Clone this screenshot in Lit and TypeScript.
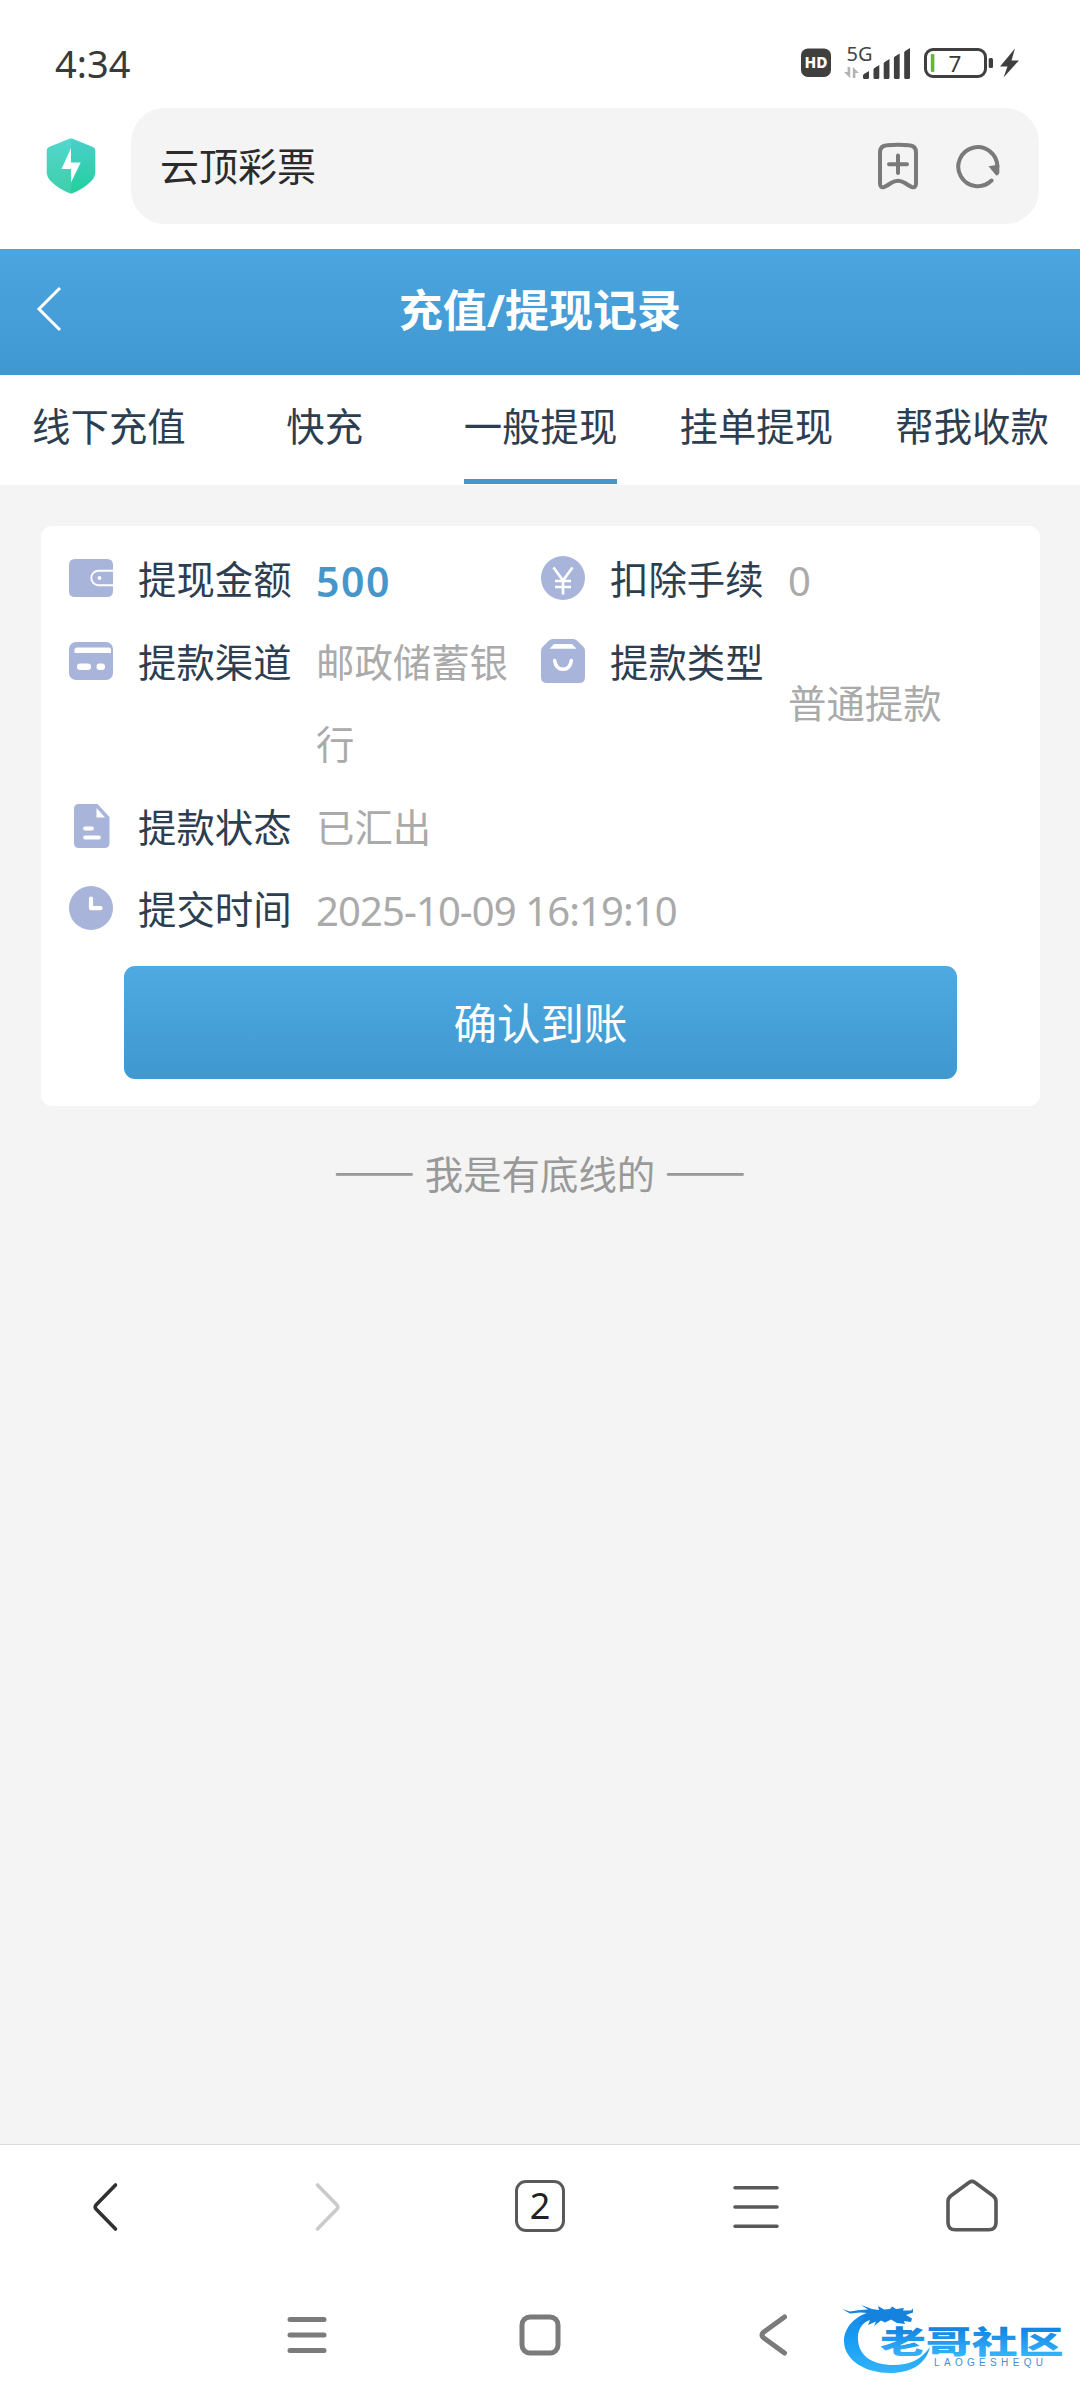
import { LitElement, html, svg, css } from "lit";
import { customElement, property } from "lit/decorators.js";
import { classMap } from "lit/directives/class-map.js";

const FONT = css`"Noto Sans", "Noto Sans CJK SC", sans-serif`;

@customElement("status-bar")
class StatusBar extends LitElement {
  static styles = css`
    :host { display: flex; height: 108px; padding: 22px 60px 0 55px; box-sizing: border-box; justify-content: space-between; font-family: ${FONT}; }
    .time { font-size: 38px; line-height: 82px; color: #3a3a3a; }
    .icons { display: flex; height: 82px; align-items: center; }
    svg { display: block; }
  `;
  render() {
    return html`
      <div class="time">4:34</div>
      <div class="icons">
        <svg width="220" height="60" viewBox="800 33 220 60">
          <rect x="801" y="48.5" width="30" height="28.5" rx="7" fill="#3f3f3f" />
          <text x="816" y="68.4" text-anchor="middle" font-size="15.5" font-weight="800" fill="#fff" textLength="23" lengthAdjust="spacingAndGlyphs">HD</text>
          <text x="846.5" y="61" font-size="20" fill="#444" textLength="26" lengthAdjust="spacingAndGlyphs">5G</text>
          <path d="M844 72h3.600v-5h2.600v11.200zM859 73h-3.600v5h-2.600V67z" fill="#b4b4b4" />
          <g fill="#3f3f3f">
            <path d="M863 75.500q0-1 1-1.500l5-3v6.500q0 1.500-1.500 1.500h-3q-1.500 0-1.500-1.500z" />
            <path d="M873.500 69.500q0-1 1-1.500l4.800-3v12.500q0 1.500-1.500 1.500h-2.800q-1.500 0-1.500-1.500z" />
            <path d="M883.700 63.500q0-1 1-1.500l4.800-3v18.500q0 1.500-1.500 1.500h-2.800q-1.500 0-1.500-1.500z" />
            <path d="M893.900 58q0-1 1-1.500l4.800-3v24q0 1.500-1.500 1.500h-2.800q-1.500 0-1.500-1.500z" />
            <path d="M904.200 52.500q0-1 1-1.500l4.800-3v29.500q0 1.500-1.500 1.500h-2.800q-1.500 0-1.500-1.500z" />
          </g>
          <rect x="925.500" y="49.500" width="60" height="27" rx="7.500" fill="none" stroke="#3f3f3f" stroke-width="3" />
          <rect x="930.800" y="54" width="3.600" height="18" rx="1.200" fill="#66b82e" />
          <text x="955" y="71.500" text-anchor="middle" font-size="22.500" fill="#3a3a3a">7</text>
          <rect x="988.700" y="58" width="4.300" height="10" rx="1.500" fill="#3f3f3f" />
          <path d="M1015 48.500 1000 66.500h7.500L1003.500 77.500 1019 60.500h-7.500z" fill="#3f3f3f" />
        </svg>
      </div>
    `;
  }
}

@customElement("address-bar")
class AddressBar extends LitElement {
  static styles = css`
    :host { display: flex; height: 141px; padding: 0 41px 25px 46px; box-sizing: border-box; align-items: center; font-family: ${FONT}; }
    .shield { width: 50px; height: 56px; margin-right: 35px; }
    .field { flex: 1; height: 116px; border-radius: 34px; background: #f4f4f4; display: flex; align-items: center; padding: 0 37px 0 29px; }
    .title { flex: 1; font-size: 39px; line-height: 60px; color: #2b2b2b; }
    .mark { margin-right: 34px; }
    svg { display: block; }
  `;
  render() {
    return html`
      <svg class="shield" viewBox="0 0 50 56">
        <defs>
          <linearGradient id="sl" x1="0" y1="0" x2="0" y2="1"><stop offset="0" stop-color="#55d6cf" /><stop offset="1" stop-color="#3ccfa9" /></linearGradient>
          <linearGradient id="sr" x1="0" y1="0" x2="0" y2="1"><stop offset="0" stop-color="#4ad0cc" /><stop offset="1" stop-color="#22cf9c" /></linearGradient>
        </defs>
        <path d="M25 .5q-1.500 0-3 .8L3 9Q.7 10 .7 12.500V34q0 5 4 9Q12 50.500 23 55q1 .5 2 .5z" fill="url(#sl)" />
        <path d="M25 .5q1.500 0 3 .8L47 9q2.300 1 2.300 3.500V34q0 5-4 9Q38 50.500 27 55q-1 .5-2 .5z" fill="url(#sr)" />
        <path d="M25 10v14.500h9.700L25 44.500V31h-9.500z" fill="#fff" />
      </svg>
      <div class="field">
        <div class="title">云顶彩票</div>
        <svg class="mark" width="44" height="48" viewBox="0 0 44 48" fill="none" stroke="#7a7a7a" stroke-width="4" stroke-linecap="round" stroke-linejoin="round">
          <path d="M4 10.500q0-7 7-7.300 11-.8 22 0 7 .3 7 7.300v31q0 5-4.500 3.300-3-1.300-6.500-3.800-7-4.500-14 0-3.500 2.500-6.500 3.800Q4 46.500 4 41.500z" />
          <path d="M22 13.500v17.500M13 22.200h18" />
        </svg>
        <svg width="48" height="48" viewBox="0 0 48 48">
          <path d="M37.500 38.500A19.500 19.500 0 1 1 43.300 25" fill="none" stroke="#7a7a7a" stroke-width="4" stroke-linecap="round" />
          <path d="M34.500 24.200 45.300 22.500V31q-1 3-3.300 2.300z" fill="#7a7a7a" />
        </svg>
      </div>
    `;
  }
}

@customElement("page-header")
class PageHeader extends LitElement {
  static styles = css`
    :host { display: grid; grid-template-columns: 120px 1fr 120px; height: 126px; align-items: center; font-family: ${FONT}; background: linear-gradient(#4ca5de, #3f98d1); }
    .back { margin: -6px 0 0 35px; display: block; }
    .title { margin: 0 0 4px; text-align: center; font-size: 44px; line-height: 64px; font-weight: 700; color: #fff; }
  `;
  render() {
    return html`
      <svg class="back" width="30" height="46" viewBox="0 0 30 46" fill="none" stroke="#fff" stroke-width="3"><path d="M25 2 4 23l21 21" /></svg>
      <h1 class="title">充值/提现记录</h1>
    `;
  }
}

@customElement("record-tabs")
class RecordTabs extends LitElement {
  @property({ type: Number }) active = 2;
  private names = ["线下充值", "快充", "一般提现", "挂单提现", "帮我收款"];
  static styles = css`
    :host { display: grid; grid-template-columns: repeat(5, 1fr); height: 110px; padding-left: 1px; box-sizing: border-box; background: #fff; font-family: ${FONT}; }
    .tab { justify-self: center; height: 109px; box-sizing: border-box; font-size: 38.400px; line-height: 102px; color: #2c3e50; }
    .on { border-bottom: 5px solid #4596cb; }
  `;
  render() {
    return this.names.map((n, i) => html`<div class=${classMap({ tab: true, on: i === this.active })}>${n}</div>`);
  }
}

const ICONS = {
  wallet: svg`<path d="M6 3h32q6 0 6 6v2.500H44V35q0 6-6 6H6q-6 0-6-6V9q0-6 6-6z" />
    <path d="M44 14.800H29.500a7.200 7.200 0 0 0 0 14.400H44" fill="none" stroke="#fff" stroke-width="1.900" /><circle cx="30.500" cy="22" r="1.900" fill="#fff" />`,
  card: svg`<rect y="3" width="44" height="38" rx="7" /><path d="M8 8.500h32q2 0 2 2V14H5.500v-3q0-2.500 2.500-2.500z" fill="#fff" />
    <rect x="8" y="24.500" width="14" height="6.500" rx="3" fill="#fff" /><rect x="27.500" y="24.500" width="8.500" height="6.500" rx="3" fill="#fff" />`,
  yen: svg`<circle cx="22" cy="22" r="22" /><path d="M12.500 11.500 22 24.500l9.500-13M22 24.500v14M14 25h16M14 31h16" fill="none" stroke="#fff" stroke-width="2.700" />`,
  bag: svg`<path d="M12 0h20q2.500 0 4.500 2l6 6q1.500 1.600 1.500 4v26q0 6-6 6H6q-6 0-6-6V12q0-2.400 1.500-4l6-6Q9.500 0 12 0z" />
    <path d="M13 5h18l4.500 4.700h-27z" fill="#fff" /><path d="M13.700 21.500q1 8.700 8.300 8.700t8.300-8.700" fill="none" stroke="#fff" stroke-width="3.600" stroke-linecap="round" />`,
  doc: svg`<path d="M10 0h18.500L40.500 13v26q0 5-5 5H10q-5 0-5-5V5q0-5 5-5z" /><path d="M27.500 4v9.500H36z" fill="#fff" />
    <path d="M16 24.500h7M16 33.500h14" stroke="#fff" stroke-width="3.800" stroke-linecap="round" />`,
  clock: svg`<circle cx="22" cy="22" r="22" /><path d="M22 12.500v9.700h9.500" fill="none" stroke="#fff" stroke-width="4.200" stroke-linecap="round" stroke-linejoin="round" />`,
};

@customElement("record-field")
class RecordField extends LitElement {
  @property() icon: keyof typeof ICONS = "wallet";
  @property() label = "";
  @property() value = "";
  @property() kind = "";
  static styles = css`
    :host { display: flex; align-items: center; font-family: ${FONT}; font-size: 38.400px; line-height: 82.500px; }
    .head { display: flex; align-self: flex-start; align-items: center; height: 82.500px; width: 247px; flex: none; }
    .head svg { width: 44px; height: 44px; fill: #a8b4da; margin: -2px 25px 0 0; }
    .label { color: #2c3e50; }
    .value { color: #aaa; }
    .number, .amount { height: 80.500px; padding-top: 2px; }
    .number { font-size: 40px; letter-spacing: -0.900px; }
    .amount { font-size: 41px; font-weight: 600; color: #4596cb; letter-spacing: 1.500px; }
  `;
  render() {
    return html`
      <div class="head"><svg viewBox="0 0 44 44">${ICONS[this.icon]}</svg><span class="label">${this.label}</span></div>
      <div class=${classMap({ value: true, number: this.kind === "number", amount: this.kind === "amount" })}>${this.value}</div>
    `;
  }
}

@customElement("record-card")
class RecordCard extends LitElement {
  static styles = css`
    :host { display: block; margin: 40.500px 40px 0 41px; background: #fff; border-radius: 11px; height: 580.500px; padding: 12.500px 28px 0; box-sizing: border-box; font-family: ${FONT}; }
    .fields { display: grid; grid-template-columns: 443px 1fr; column-gap: 29px; }
    .wide { grid-column: 1 / 3; }
    .confirm { display: block; width: 833px; height: 113px; margin: 15.500px auto 0; border: 0; border-radius: 11px; background: linear-gradient(#4faae1, #3f98d0); color: #fff; font: 43.500px/112px ${FONT}; padding: 0; text-align: center; }
  `;
  render() {
    return html`
      <div class="fields">
        <record-field icon="wallet" label="提现金额" value="500" kind="amount"></record-field>
        <record-field icon="yen" label="扣除手续" value="0" kind="number"></record-field>
        <record-field icon="card" label="提款渠道" value="邮政储蓄银行"></record-field>
        <record-field icon="bag" label="提款类型" value="普通提款"></record-field>
        <record-field class="wide" icon="doc" label="提款状态" value="已汇出"></record-field>
        <record-field class="wide" icon="clock" label="提交时间" value="2025-10-09 16:19:10" kind="number"></record-field>
      </div>
      <button class="confirm">确认到账</button>
    `;
  }
}

@customElement("browser-nav")
class BrowserNav extends LitElement {
  static styles = css`
    :host { display: grid; grid-template-columns: repeat(5, 1fr); height: 123px; padding-bottom: 2px; background: #fff; border-top: 1px solid #dcdcdc; align-items: center; justify-items: center; font-family: ${FONT}; }
    svg { display: block; fill: none; stroke: #595959; stroke-width: 3.600; stroke-linecap: round; stroke-linejoin: round; }
    .back { stroke: #303030; }
    .forward { stroke: #cacaca; }
    .tabs { width: 50px; height: 52px; box-sizing: border-box; border: 3.500px solid #595959; border-radius: 11px; font-size: 36px; line-height: 45px; text-align: center; color: #222; margin-top: -1px; }
  `;
  render() {
    return html`
      <svg class="back" width="56" height="56" viewBox="0 0 56 56"><path d="M35.500 6 16 26q-1.600 2 0 4l19.500 20" /></svg>
      <svg class="forward" width="56" height="56" viewBox="0 0 56 56"><path d="m21.500 6 19.500 20q1.600 2 0 4l-19.500 20" /></svg>
      <div class="tabs">2</div>
      <svg width="56" height="56" viewBox="0 0 56 56"><path d="M7 8.700h42M7 28h42M7 47.200h42" /></svg>
      <svg width="56" height="56" viewBox="0 0 56 56"><path d="M25 3.500q3-2.200 6 0l18 13.300q3 2.200 3 5.700v21q0 7.300-7.300 7.300H11.300Q4 50.800 4 43.500v-21q0-3.500 3-5.700z" /></svg>
    `;
  }
}

@customElement("system-nav")
class SystemNav extends LitElement {
  static styles = css`
    :host { display: grid; grid-template-columns: repeat(3, 233px); justify-content: center; height: 130px; padding-right: 1px; background: #fff; align-items: center; justify-items: center; }
    svg { display: block; fill: none; stroke: #7b7b7b; stroke-width: 5; stroke-linecap: round; stroke-linejoin: round; }
  `;
  render() {
    return html`
      <svg width="48" height="48" viewBox="0 0 48 48"><path d="M7 8.500h34M7 24h34M7 39.500h34" /></svg>
      <svg width="48" height="48" viewBox="0 0 48 48"><rect x="6" y="6" width="36" height="36" rx="8" /></svg>
      <svg width="48" height="48" viewBox="0 0 48 48"><path d="M35.500 6 15.500 20.500q-5 3.500 0 7l20 14.500" /></svg>
    `;
  }
}

@customElement("community-logo")
class CommunityLogo extends LitElement {
  static styles = css`
    :host { display: block; }
    svg { display: block; }
    .name { font-family: "Noto Sans CJK SC", sans-serif; font-weight: 900; }
    .latin { font-family: "Liberation Sans", sans-serif; }
  `;
  render() {
    return html`
      <svg width="240" height="90" viewBox="830 2295 240 90">
        <defs>
          <linearGradient id="ring" gradientUnits="userSpaceOnUse" x1="0" y1="2305" x2="0" y2="2373"><stop offset="0" stop-color="#1583e2" /><stop offset=".5" stop-color="#189cf4" /><stop offset="1" stop-color="#32b4fa" /></linearGradient>
          <linearGradient id="word" gradientUnits="userSpaceOnUse" x1="0" y1="-28" x2="0" y2="3"><stop offset="0" stop-color="#0f7ddf" /><stop offset="1" stop-color="#35b3fa" /></linearGradient>
        </defs>
        <path d="M873 2311C855 2315 843.500 2328 844 2342c1 19 22 31 46 31 21 0 36-9 40-26-9 13-21 18-36 18-23 0-35-10-36-25-1-14 9-22 23-25z" fill="url(#ring)" />
        <path d="M842 2309L850 2311.500L860 2310L868 2309.500L861 2305L872 2309L879 2310L878 2306L884 2309.500L890 2309L892 2306.500L896 2309L904 2308L903 2310.500L911 2310.500L913 2308.500L913 2312.500L906 2315L912 2318.500L911 2322L904 2321L905 2324L897 2323L891 2319.500L885 2322.500L881 2320.500L874 2326L876 2321.500L868 2325L870 2320L858 2325L866 2317L860 2318L868 2313L860 2312.500L850 2313.500Z" fill="#1583dd" />
        <text class="name" transform="translate(880 2352.500) scale(1.480 1)" font-size="31" fill="url(#word)" textLength="124">老哥社区</text>
        <text class="latin" x="934" y="2366" font-size="10" fill="#3f8fd8" textLength="109">LAOGESHEQU</text>
      </svg>
    `;
  }
}

@customElement("app-root")
class AppRoot extends LitElement {
  static styles = css`
    :host { display: flex; flex-direction: column; width: 1080px; height: 2400px; background: #fff; position: relative; overflow: hidden; font-family: ${FONT}; }
    .page { flex: 1; background: #f4f4f4; }
    .end { display: flex; justify-content: center; gap: 18px; margin-top: 36px; font: 38.400px/60px "Noto Sans CJK SC", sans-serif; color: #999; }
    .dash { transform: translateY(-5px) scale(1.260, 1.200); }
    .logo { position: absolute; left: 830px; top: 2295px; }
  `;
  render() {
    return html`
      <status-bar></status-bar>
      <address-bar></address-bar>
      <page-header></page-header>
      <record-tabs></record-tabs>
      <div class="page">
        <record-card></record-card>
        <div class="end"><span class="dash">——</span><span>我是有底线的</span><span class="dash">——</span></div>
      </div>
      <browser-nav></browser-nav>
      <system-nav></system-nav>
      <community-logo class="logo"></community-logo>
    `;
  }
}
